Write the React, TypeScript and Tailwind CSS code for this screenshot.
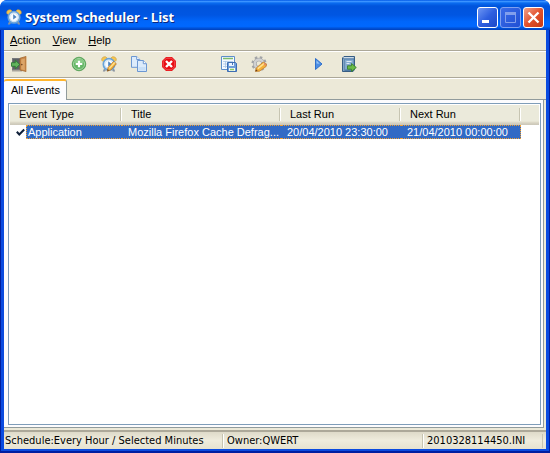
import type { ReactNode } from "react";

function ClockIcon({ pencil = false }: { pencil?: boolean }) {
  return (
    <svg width="16" height="16" viewBox="0 0 16 16" aria-hidden="true">
      <path d="M3 12.5 1.8 15.5H4L5 14zM13 12.5l1.2 3H12L11 14z" fill="#8a94a0" />
      <path d="M.7 4.2C.3 1.8 2.4.3 4.6.8l1.6 1.3-4 3.6zM15.3 4.2C15.7 1.8 13.6.3 11.4.8L9.8 2.1l4 3.6z" fill="#f6c650" stroke="#c99a3a" strokeWidth=".6" />
      <circle cx="8" cy="8.3" r="5.7" fill="#e9f3fb" stroke="#6aa3d8" strokeWidth="1.7" />
      <circle cx="8" cy="8.3" r="4.2" fill="#f7fbff" stroke="#b4d0ea" strokeWidth=".6" />
      <path d="M7.2 5.3v5.2l3.4-2.4z" fill="#4c83bd" />
      {pencil && (
        <>
          <path d="M6.2 15.2 7 11.6 12.6 5.4 15.4 7.8 9.8 14z" fill="#f7b73c" stroke="#b06e22" strokeWidth=".7" />
          <path d="m8.4 12.4 5.4-6" stroke="#ffe49a" strokeWidth="1.2" />
          <path d="m6.2 15.2.5-2.1 1.6 1.5z" fill="#6b4a2a" />
        </>
      )}
    </svg>
  );
}

function ExitIcon() {
  return (
    <svg width="16" height="16" viewBox="0 0 16 16" aria-hidden="true">
      <path d="M1 2h9v13H1z" fill="#77797c" />
      <path d="M2 3h8v10H2z" fill="#5d6165" />
      <path d="M1 14h10v1.5H1z" fill="#a7a39a" />
      <path d="M9 2.2 15 .5v15L9 14z" fill="#c98748" stroke="#a2672f" strokeWidth=".8" />
      <path d="m10.2 3.4 3.6-1v11.8l-3.6-1z" fill="#dca568" />
      <path d="M15.4.5v15" stroke="#e8c79b" strokeWidth=".8" />
      <circle cx="10.8" cy="8.6" r=".8" fill="#6d4422" />
      <path d="M.5 6.7h3.8V4.2L8.8 8.5l-4.5 4.3v-2.5H.5z" fill="#62b45d" stroke="#2d7a34" strokeWidth=".9" />
    </svg>
  );
}

function AddIcon() {
  return (
    <svg width="16" height="16" viewBox="0 0 16 16" aria-hidden="true">
      <circle cx="8" cy="8" r="6.8" fill="#4fa653" stroke="#4a9a4c" strokeWidth=".7" />
      <circle cx="8" cy="8" r="5.6" fill="#65b766" stroke="#b4dcb2" strokeWidth=".8" />
      <path d="M3.2 7a4.9 4.9 0 0 1 9.6 0z" fill="#8bcc88" />
      <path d="M8 4.7v6.6M4.7 8h6.6" stroke="#fff" strokeWidth="2.2" />
    </svg>
  );
}

function CopyIcon() {
  return (
    <svg width="16" height="16" viewBox="0 0 16 16" aria-hidden="true">
      <path d="M.5.5h5.2l3 3v7.800H.5z" fill="#dcebfb" stroke="#6b97d3" />
      <path d="M5.700.5v3h3" fill="#fff" stroke="#6b97d3" />
      <path d="M6.500 4.500h5.800l3.200 3.200v7.800h-9z" fill="#dcebfb" stroke="#6b97d3" />
      <path d="M12.300 4.500v3.200h3.200" fill="#fff" stroke="#6b97d3" />
      <path d="M7.500 11h7v3.500h-7z" fill="#c7dff8" />
    </svg>
  );
}

function DeleteIcon() {
  return (
    <svg width="16" height="16" viewBox="0 0 16 16" aria-hidden="true">
      <path d="M5 1h6l4 4v6l-4 4H5l-4-4V5z" fill="#e80c12" />
      <path d="M5.4 2.2h5.2l3.2 3.2v5.2l-3.2 3.2H5.4l-3.2-3.2V5.4z" fill="none" stroke="#f47373" strokeWidth=".7" />
      <path d="m5 5 6 6m0-6-6 6" stroke="#fff" strokeWidth="2.4" />
    </svg>
  );
}

function TableSaveIcon() {
  return (
    <svg width="16" height="16" viewBox="0 0 16 16" aria-hidden="true">
      <path d="M.5.5h13v13H.5z" fill="#f4f9ff" stroke="#5d8ecb" />
      <path d="M2 2.5h10" stroke="#7cbb6d" strokeWidth="1.4" />
      <path d="M2 5.5h10M2 8h10M2 10.5h6M4.5 5v7M7.5 5v7" stroke="#a9c5e6" strokeWidth=".8" />
      <path d="M6.5 6.5h8l1 1v8h-9z" fill="#6d9ddb" stroke="#3d6db2" />
      <path d="M8 7h5v3H8z" fill="#eaf3ff" />
      <path d="M11 7h1v2h-1z" fill="#4976b8" />
      <path d="M8 12h6v3H8z" fill="#f6fbf2" />
      <path d="M9 13.5h4" stroke="#8ecb68" strokeWidth="1.4" />
    </svg>
  );
}

function GearIcon() {
  return (
    <svg width="16" height="16" viewBox="0 0 16 16" aria-hidden="true">
      <circle cx="8" cy="7.7" r="6.3" fill="none" stroke="#a2a4a6" strokeWidth="2.6" strokeDasharray="2.5 2.45" />
      <circle cx="8" cy="7.7" r="4.2" fill="none" stroke="#9b9da0" strokeWidth="3.6" />
      <circle cx="8" cy="7.7" r="4.2" fill="none" stroke="#d0d1d2" strokeWidth="2.6" />
      <path d="M4.4 15.4 5.2 12l7-6 3.4 2.1-.5 2.4-6.600 4.700z" fill="#f6b13a" stroke="#b87528" strokeWidth=".7" />
      <path d="m6.800 12.700 6.400-5.200" stroke="#ffe391" strokeWidth="1.600" />
      <path d="m4.400 15.400.6-2.200 1.700 1.500z" fill="#6a4220" />
      <path d="m13.300 6.800 2.100 1.500-.6 1.800-2.300-1.800z" fill="#e58c63" />
    </svg>
  );
}

function PlayIcon() {
  return (
    <svg width="16" height="16" viewBox="0 0 16 16" aria-hidden="true">
      <path d="M4.5 2.5v11l6.500-5.500z" fill="#4c8ee4" stroke="#2f6fcb" strokeLinejoin="round" />
      <path d="M5.500 4.600v3l3.200.2z" fill="#98c5f7" />
    </svg>
  );
}

function BookIcon() {
  return (
    <svg width="16" height="16" viewBox="0 0 16 16" aria-hidden="true">
      <path d="M1.5 2 3 .5h10.500v13L12 15.500H1.500z" fill="#4f7ba6" stroke="#375d84" />
      <path d="M2.500 1.700h10.300" stroke="#e5eef5" strokeWidth="1.100" />
      <path d="M4 3.500h8.500v10H4z" fill="#85abd0" />
      <path d="M2.800 3v12" stroke="#a9c6e0" strokeWidth=".8" />
      <path d="M5.500 5.500h5M5.500 7.500h3" stroke="#dbe8f3" />
      <path d="M6.500 9.800h4V7.500l4.800 4-4.800 4v-2.300h-4z" fill="#6cbb47" stroke="#38812c" strokeWidth=".9" />
    </svg>
  );
}

function ToolButton({ label, children }: { label: string; children: ReactNode }) {
  return (
    <button type="button" aria-label={label} className="flex h-6 w-[30px] items-center justify-center">
      {children}
    </button>
  );
}

function ToolGap() {
  return <div className="w-[30px]" />;
}

function MenuItem({ name }: { name: string }) {
  return (
    <button type="button" className="px-1.5 leading-[18px]">
      <span className="underline">{name[0]}</span>
      {name.slice(1)}
    </button>
  );
}

const captionButton = "flex size-[21px] items-center justify-center rounded-[3px] border ";

function TitleBar() {
  return (
    <header className="flex h-[30px] items-center rounded-t-[6px] bg-[linear-gradient(180deg,#0058e6_0%,#3a93ff_5%,#0a6cf0_10%,#0054dc_20%,#0056e2_50%,#0066fb_72%,#0068ff_88%,#0052d8_94%,#0040bd_100%)] px-1.5 pt-1">
      <ClockIcon />
      <h1 className="ml-[3px] flex-1 truncate font-['Open_Sans',sans-serif] text-[13px] leading-5 font-bold text-white [text-shadow:1px_1px_0_#0a2a80]">
        System Scheduler - List
      </h1>
      <div className="flex gap-0.5">
        <button type="button" aria-label="Minimize" className={captionButton + "border-white bg-linear-to-br from-[#6e95f3] via-[#2e5fe0] to-[#1c49c8]"}>
          <svg width="19" height="19" viewBox="0 0 19 19"><path d="M4 12h7v3H4z" fill="#fff" /></svg>
        </button>
        <button type="button" aria-label="Maximize" disabled className={captionButton + "border-[#7fa0f0] bg-linear-to-br from-[#3c6ce8] to-[#1f4fd4]"}>
          <svg width="19" height="19" viewBox="0 0 19 19"><path d="M4.5 4.5h10v10h-10z" fill="none" stroke="#829fec" /><path d="M4 4h11v3H4z" fill="#829fec" /></svg>
        </button>
        <button type="button" aria-label="Close" className={captionButton + "border-white bg-linear-to-br from-[#f0a088] via-[#e2512c] to-[#c83a14]"}>
          <svg width="19" height="19" viewBox="0 0 19 19"><path d="m4.500 4.500 10 10m0-10-10 10" stroke="#fff" strokeWidth="2.4" /></svg>
        </button>
      </div>
    </header>
  );
}

const headings = ["Event Type", "Title", "Last Run", "Next Run"];
const selected = "border-y border-dotted border-[#f0a030] bg-[#316ac5] leading-3 text-white ";

function EventTable() {
  return (
    <table className="w-full table-fixed border-separate border-spacing-0 text-left">
      <colgroup>
        <col className="w-[112px]" />
        <col className="w-[159px]" />
        <col className="w-[120px]" />
        <col className="w-[120px]" />
        <col />
      </colgroup>
      <thead>
        <tr className="bg-[linear-gradient(180deg,#ebeadb_0px,#ebeadb_16px,#e2decd_17px,#d6d2c2_18px,#cbc7b8_20px)]">
          {headings.map((h) => (
            <th key={h} className="p-0 pt-[3px] pb-1 font-normal">
              <div className="border-r border-white">
                <div className="border-r border-[#c7c5b2] pl-[9px] leading-[13px]">{h}</div>
              </div>
            </th>
          ))}
          <th className="p-0" aria-hidden="true" />
        </tr>
      </thead>
      <tbody>
        <tr>
          <td className="p-0">
            <div className="flex">
              <label className="flex w-4 items-center justify-end pr-px">
                <input type="checkbox" defaultChecked aria-label="Application enabled" className="peer sr-only" />
                <svg width="9" height="9" viewBox="0 0 9 9" className="invisible peer-checked:visible" aria-hidden="true">
                  <path d="M.8 3.8 3.3 6.500 8.200 1.500" fill="none" stroke="#10203a" strokeWidth="2" />
                </svg>
              </label>
              <div className={selected + "flex-1 border-l pl-px"}>Application</div>
            </div>
          </td>
          <td className="p-0">
            <div className={selected + "truncate pl-1.5"}>Mozilla Firefox Cache Defrag...</div>
          </td>
          <td className="p-0">
            <div className={selected + "pl-1.5"}>20/04/2010 23:30:00</div>
          </td>
          <td className="p-0">
            <div className={selected + "border-r pl-1.5"}>21/04/2010 00:00:00</div>
          </td>
          <td className="p-0" />
        </tr>
      </tbody>
    </table>
  );
}

export default function App() {
  return (
    <div className="flex min-h-screen flex-col overflow-hidden rounded-t-[7px] bg-[#0048dd] font-['Liberation_Sans',Arial,sans-serif] text-[11px] text-black">
      <TitleBar />
      <div className="flex flex-1 flex-col border-x border-b-2 border-[#001ea0]">
        <div className="flex flex-1 flex-col border-x-3 border-b-2 border-[#0a4be0] bg-[#ece9d8]">
          <nav aria-label="Menu" className="flex h-[22px] border-b border-white">
            <div className="flex flex-1 border-b border-[#aca899]">
              <MenuItem name="Action" />
              <MenuItem name="View" />
              <MenuItem name="Help" />
            </div>
          </nav>
          <div role="toolbar" aria-label="Tools" className="border-b border-white">
            <div className="flex border-b border-[#aca899] pb-px">
              <ToolButton label="Exit"><ExitIcon /></ToolButton>
              <ToolGap />
              <ToolButton label="Add event"><AddIcon /></ToolButton>
              <ToolButton label="Edit event"><ClockIcon pencil /></ToolButton>
              <ToolButton label="Copy event"><CopyIcon /></ToolButton>
              <ToolButton label="Delete event"><DeleteIcon /></ToolButton>
              <ToolGap />
              <ToolButton label="Save list"><TableSaveIcon /></ToolButton>
              <ToolButton label="Options"><GearIcon /></ToolButton>
              <ToolGap />
              <ToolButton label="Run"><PlayIcon /></ToolButton>
              <ToolButton label="View log"><BookIcon /></ToolButton>
            </div>
          </div>
          <div role="tablist" className="flex h-[21px]">
            <button type="button" role="tab" aria-selected="true" className="rounded-t-[3px] border-t-2 border-r border-t-[#ffb52e] border-r-[#919b9c] bg-[#fcfcfe] pr-1.5 pb-0.5 pl-[7px] leading-4">
              All Events
            </button>
            <div className="flex-1 border-b border-[#919b9c]" />
          </div>
          <div role="tabpanel" className="mr-0.5 mb-0.5 flex flex-1 flex-col border-r border-b border-[#919b9c] bg-[#fcfcfe] pt-[3px] pr-0.5 pb-0.5 pl-1">
            <div className="flex-1 border border-[#7f9db9] bg-white p-px">
              <EventTable />
            </div>
          </div>
          <footer className="flex h-[19px] items-center border-t-2 border-[#aca899] bg-linear-to-b from-[#dedac9] via-[#efecdd] to-[#e6e2d0] font-['DejaVu_Sans_Condensed','DejaVu_Sans',sans-serif] leading-[14px] whitespace-nowrap">
            <div className="w-[219px] border-r border-[#c7c5b2] pl-px">Schedule:Every Hour / Selected Minutes</div>
            <div className="w-[200px] border-r border-l border-r-[#c7c5b2] border-l-white pl-[3px]">Owner:QWERT</div>
            <div className="flex-1 border-l border-white pl-[3px]">2010328114450.INI</div>
            <div className="mr-[3px] h-[14px] border-l border-[#c7c5b2]" />
          </footer>
        </div>
      </div>
    </div>
  );
}
